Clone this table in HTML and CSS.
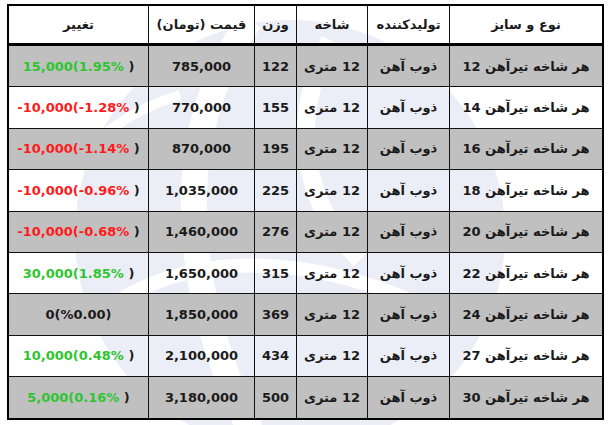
FILE: index.html
```html
<!DOCTYPE html>
<html lang="fa">
<head>
<meta charset="utf-8">
<link rel="stylesheet" href="styles.css">
</head>
<body>
<div class="wrap">
  <svg class="watermark" width="616" height="425" viewBox="0 0 616 425" aria-hidden="true">
    <circle cx="290" cy="235" r="215" fill="#eceef7"/>
    <path d="M250 20 C180 120 170 260 250 430" stroke="#fff" stroke-width="26" fill="none"/>
    <path d="M330 40 C290 120 300 200 360 260" stroke="#fff" stroke-width="18" fill="none"/>
    <path d="M120 300 C200 250 330 250 470 330" stroke="#fff" stroke-width="14" fill="none"/>
    <path d="M60 180 C90 140 130 110 180 95" stroke="#fff" stroke-width="10" fill="none"/>
  </svg>
  <table class="prices">
    <thead>
      <tr>
        <th class="c-name">نوع و سایز</th>
        <th class="c-maker">تولیدکننده</th>
        <th class="c-branch">شاخه</th>
        <th class="c-weight">وزن</th>
        <th class="c-price">قیمت (تومان)</th>
        <th class="c-change">تغییر</th>
      </tr>
    </thead>
    <tbody>
      <tr class="gray"><td>هر شاخه تیرآهن 12</td><td>ذوب آهن</td><td>12 متری</td><td>122</td><td>785,000</td><td><span class="ltr"><span class="up">15,000(1.95%</span> )</span></td></tr>
      <tr><td>هر شاخه تیرآهن 14</td><td>ذوب آهن</td><td>12 متری</td><td>155</td><td>770,000</td><td><span class="ltr"><span class="down">-10,000(-1.28%</span> )</span></td></tr>
      <tr class="gray"><td>هر شاخه تیرآهن 16</td><td>ذوب آهن</td><td>12 متری</td><td>195</td><td>870,000</td><td><span class="ltr"><span class="down">-10,000(-1.14%</span> )</span></td></tr>
      <tr><td>هر شاخه تیرآهن 18</td><td>ذوب آهن</td><td>12 متری</td><td>225</td><td>1,035,000</td><td><span class="ltr"><span class="down">-10,000(-0.96%</span> )</span></td></tr>
      <tr class="gray"><td>هر شاخه تیرآهن 20</td><td>ذوب آهن</td><td>12 متری</td><td>276</td><td>1,460,000</td><td><span class="ltr"><span class="down">-10,000(-0.68%</span> )</span></td></tr>
      <tr><td>هر شاخه تیرآهن 22</td><td>ذوب آهن</td><td>12 متری</td><td>315</td><td>1,650,000</td><td><span class="ltr"><span class="up">30,000(1.85%</span> )</span></td></tr>
      <tr class="gray"><td>هر شاخه تیرآهن 24</td><td>ذوب آهن</td><td>12 متری</td><td>369</td><td>1,850,000</td><td><span class="ltr">0(%0.00)</span></td></tr>
      <tr><td>هر شاخه تیرآهن 27</td><td>ذوب آهن</td><td>12 متری</td><td>434</td><td>2,100,000</td><td><span class="ltr"><span class="up">10,000(0.48%</span> )</span></td></tr>
      <tr class="gray"><td>هر شاخه تیرآهن 30</td><td>ذوب آهن</td><td>12 متری</td><td>500</td><td>3,180,000</td><td><span class="ltr"><span class="up">5,000(0.16%</span> )</span></td></tr>
    </tbody>
  </table>
</div>
</body>
</html>
```

FILE: styles.css
```css
html, body {
  margin: 0;
  padding: 0;
  background: #fff;
}
.wrap {
  position: relative;
  width: 616px;
  height: 425px;
  overflow: hidden;
}
.watermark {
  position: absolute;
  left: 0;
  top: 0;
}
.prices {
  position: relative;
  direction: rtl;
  border-collapse: collapse;
  margin: 4px 0 0 7px;
  width: 588px;
  table-layout: fixed;
  font-family: "DejaVu Sans", "Liberation Sans", sans-serif;
  font-weight: bold;
  font-size: 13px;
  color: #1a1a1a;
  border: 2px solid #000;
}
.prices th,
.prices td {
  border: 1px solid #111;
  text-align: center;
  vertical-align: middle;
  padding: 0;
  white-space: nowrap;
}
.prices th {
  height: 37px;
  border-bottom: 3px solid #000;
}
.prices td {
  height: 40.4px;
}
.c-name { width: 152px; }
.c-maker { width: 81px; }
.c-branch { width: 70px; }
.c-weight { width: 41px; }
.c-price { width: 105px; }
.c-change { width: 139px; }
.gray td {
  background: #c0c0c0;
}
.ltr {
  direction: ltr;
  unicode-bidi: isolate-override;
}
.up { color: #2ec52e; }
.down { color: #ff1a1a; }
```
